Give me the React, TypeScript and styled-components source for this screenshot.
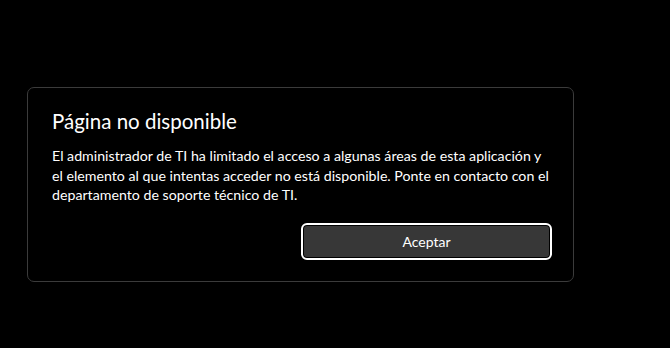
import React from "react";
import styled, { createGlobalStyle } from "styled-components";

const GlobalStyle = createGlobalStyle`
  html, body {
    margin: 0;
    padding: 0;
    background: #000000;
  }
  body {
    width: 670px;
    height: 348px;
    overflow: hidden;
    font-family: "Lato", "Open Sans", sans-serif;
    -webkit-font-smoothing: antialiased;
  }
`;

const Screen = styled.main`
  width: 670px;
  height: 348px;
  box-sizing: border-box;
  padding: 87px 0 0 27px;
  background: #000000;
`;

const Dialog = styled.section`
  width: 547px;
  height: 195px;
  box-sizing: border-box;
  border: 1px solid #3b3b3b;
  border-radius: 7px;
  background: #000000;
  padding: 19px 21px 21px 24px;
  display: flex;
  flex-direction: column;
`;

const Title = styled.h1`
  margin: 0 0 11px;
  font-family: "Lato", "Open Sans", sans-serif;
  font-weight: 400;
  font-size: 20.5px;
  line-height: 28px;
  color: #ffffff;
`;

const Message = styled.p`
  margin: 0;
  font-size: 14.2px;
  line-height: 19.7px;
  color: #ffffff;
`;

const Footer = styled.div`
  margin-top: auto;
  display: flex;
  justify-content: flex-end;
`;

const Button = styled.button`
  width: 251px;
  height: 37px;
  box-sizing: border-box;
  border: 2px solid #ffffff;
  border-radius: 6px;
  box-shadow: inset 0 0 0 1px #000000;
  background: #373737;
  color: #ffffff;
  font-family: "Lato", "Open Sans", sans-serif;
  font-size: 14px;
  padding: 0 0 1px;
  cursor: pointer;
`;

export default function App() {
  return (
    <>
      <GlobalStyle />
      <Screen>
        <Dialog role="dialog" aria-labelledby="dlg-title">
          <Title id="dlg-title">Página no disponible</Title>
          <Message>
            El administrador de TI ha limitado el acceso a algunas áreas de esta aplicación y el elemento al que
            intentas acceder no está disponible. Ponte en contacto con el departamento de soporte técnico de TI.
          </Message>
          <Footer>
            <Button type="button">Aceptar</Button>
          </Footer>
        </Dialog>
      </Screen>
    </>
  );
}
